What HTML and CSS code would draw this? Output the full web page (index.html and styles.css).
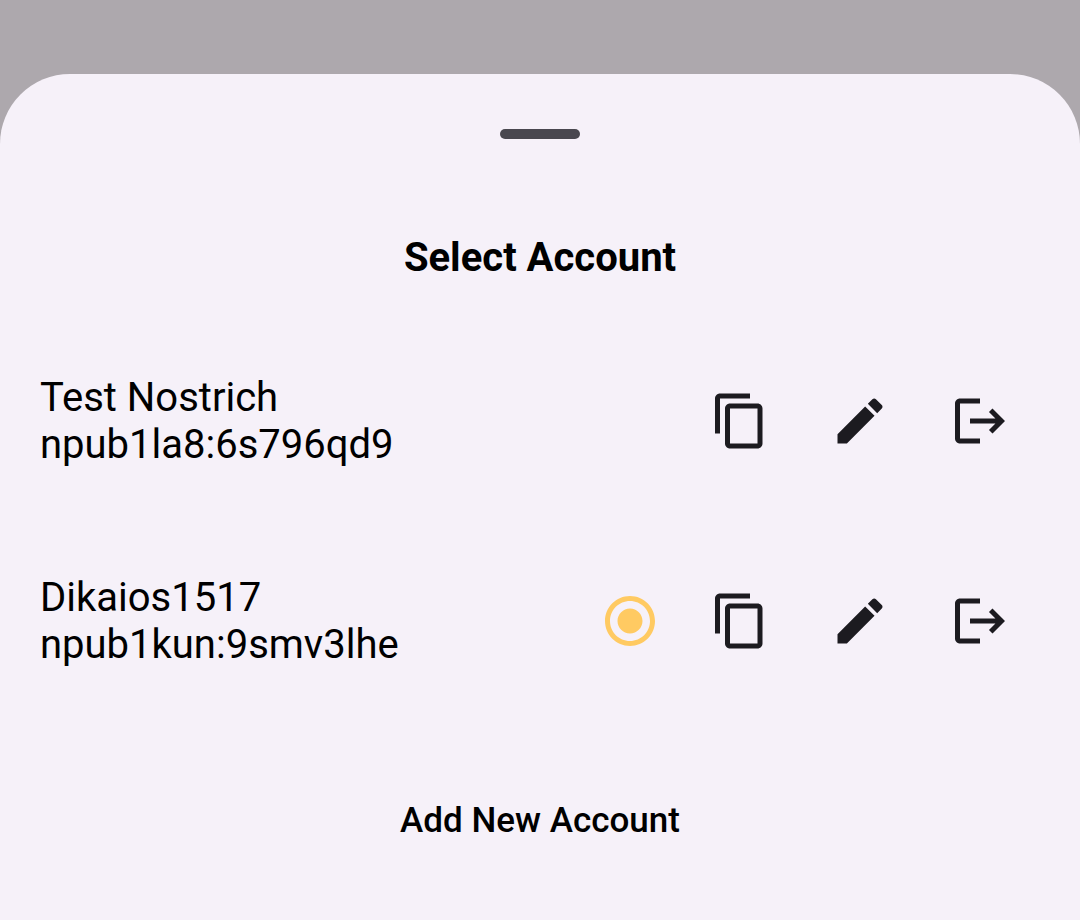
FILE: index.html
```html
<!DOCTYPE html>
<html lang="en">
<head>
<meta charset="utf-8">
<meta name="viewport" content="width=device-width, initial-scale=1">
<title>Select Account</title>
<link rel="stylesheet" href="styles.css">
</head>
<body>
<svg class="sprite" aria-hidden="true">
  <symbol id="copy" viewBox="0 0 24 24"><path d="M16 1H4c-1.100 0-2 .9-2 2v14h2V3h12V1zm3 4H8c-1.100 0-2 .9-2 2v14c0 1.100.9 2 2 2h11c1.100 0 2-.9 2-2V7c0-1.100-.9-2-2-2zm0 16H8V7h11v14z"/></symbol>
  <symbol id="edit" viewBox="0 0 24 24"><path d="M3 17.250V21h3.750L17.810 9.940l-3.750-3.750L3 17.250zM20.710 7.040c.39-.39.39-1.020 0-1.410l-2.340-2.340c-.39-.39-1.020-.39-1.410 0l-1.830 1.830 3.750 3.750 1.830-1.830z"/></symbol>
  <symbol id="logout" viewBox="0 0 24 24"><path d="M17 7l-1.410 1.410L18.170 11H8v2h10.170l-2.580 2.580L17 17l5-5-5-5zM4 5h8V3H4c-1.100 0-2 .9-2 2v14c0 1.100.9 2 2 2h8v-2H4V5z"/></symbol>
  <symbol id="active" viewBox="0 0 24 24"><path d="M12 7c-2.760 0-5 2.240-5 5s2.240 5 5 5 5-2.240 5-5-2.240-5-5-5zm0-5C6.480 2 2 6.480 2 12s4.480 10 10 10 10-4.480 10-10S17.520 2 12 2zm0 18c-4.420 0-8-3.580-8-8s3.580-8 8-8 8 3.580 8 8-3.580 8-8 8z"/></symbol>
</svg>
<main class="sheet">
  <div class="handle"></div>
  <h1 class="title">Select Account</h1>
  <ul class="accounts">
    <li class="account">
      <div class="identity"><div>Test Nostrich</div><div>npub1la8:6s796qd9</div></div>
      <div class="actions">
        <button class="action" aria-label="Copy public key"><svg class="icon"><use href="#copy"/></svg></button>
        <button class="action" aria-label="Edit account"><svg class="icon"><use href="#edit"/></svg></button>
        <button class="action" aria-label="Log out"><svg class="icon"><use href="#logout"/></svg></button>
      </div>
    </li>
    <li class="account">
      <div class="identity"><div>Dikaios1517</div><div>npub1kun:9smv3lhe</div></div>
      <svg class="icon active" role="img" aria-label="Active account"><use href="#active"/></svg>
      <div class="actions">
        <button class="action" aria-label="Copy public key"><svg class="icon"><use href="#copy"/></svg></button>
        <button class="action" aria-label="Edit account"><svg class="icon"><use href="#edit"/></svg></button>
        <button class="action" aria-label="Log out"><svg class="icon"><use href="#logout"/></svg></button>
      </div>
    </li>
  </ul>
  <button class="add">Add New Account</button>
</main>
</body>
</html>
```
FILE: styles.css
```css
* { box-sizing: border-box; }

body {
  margin: 0;
  min-height: 100vh;
  display: flex;
  flex-direction: column;
  padding-top: 74px;
  background: #ada8ad;
  color: #000;
  font-family: Roboto, "Liberation Sans", sans-serif;
}

.sprite { position: absolute; width: 0; height: 0; }

.sheet {
  flex: 1;
  display: flex;
  flex-direction: column;
  align-items: center;
  padding-top: 55px;
  border-radius: 70px 70px 0 0;
  background: #f6f1f9;
}

.handle {
  width: 80px;
  height: 10px;
  border-radius: 5px;
  background: #49474f;
}

.title {
  margin: 95px 0 0;
  font-size: 40px;
  line-height: 48px;
  font-weight: 700;
}

.accounts {
  align-self: stretch;
  margin: 39px 0 0;
  padding: 0 40px;
  list-style: none;
}

.account {
  display: flex;
  align-items: center;
  height: 200px;
}

.identity {
  flex: 1;
  font-size: 40px;
  line-height: 47px;
}

.actions { display: flex; }

.action {
  display: flex;
  align-items: center;
  justify-content: center;
  width: 120px;
  height: 120px;
  padding: 0;
  border: 0;
  background: none;
  color: #1c1b20;
}

.icon {
  width: 60px;
  height: 60px;
  fill: currentColor;
}

.active { margin-right: 20px; color: #ffca62; }

.add {
  margin-top: 50px;
  padding: 28px 30px;
  border: 0;
  background: none;
  color: #000;
  font: 500 35px/44px Roboto, "Liberation Sans", sans-serif;
}
```
